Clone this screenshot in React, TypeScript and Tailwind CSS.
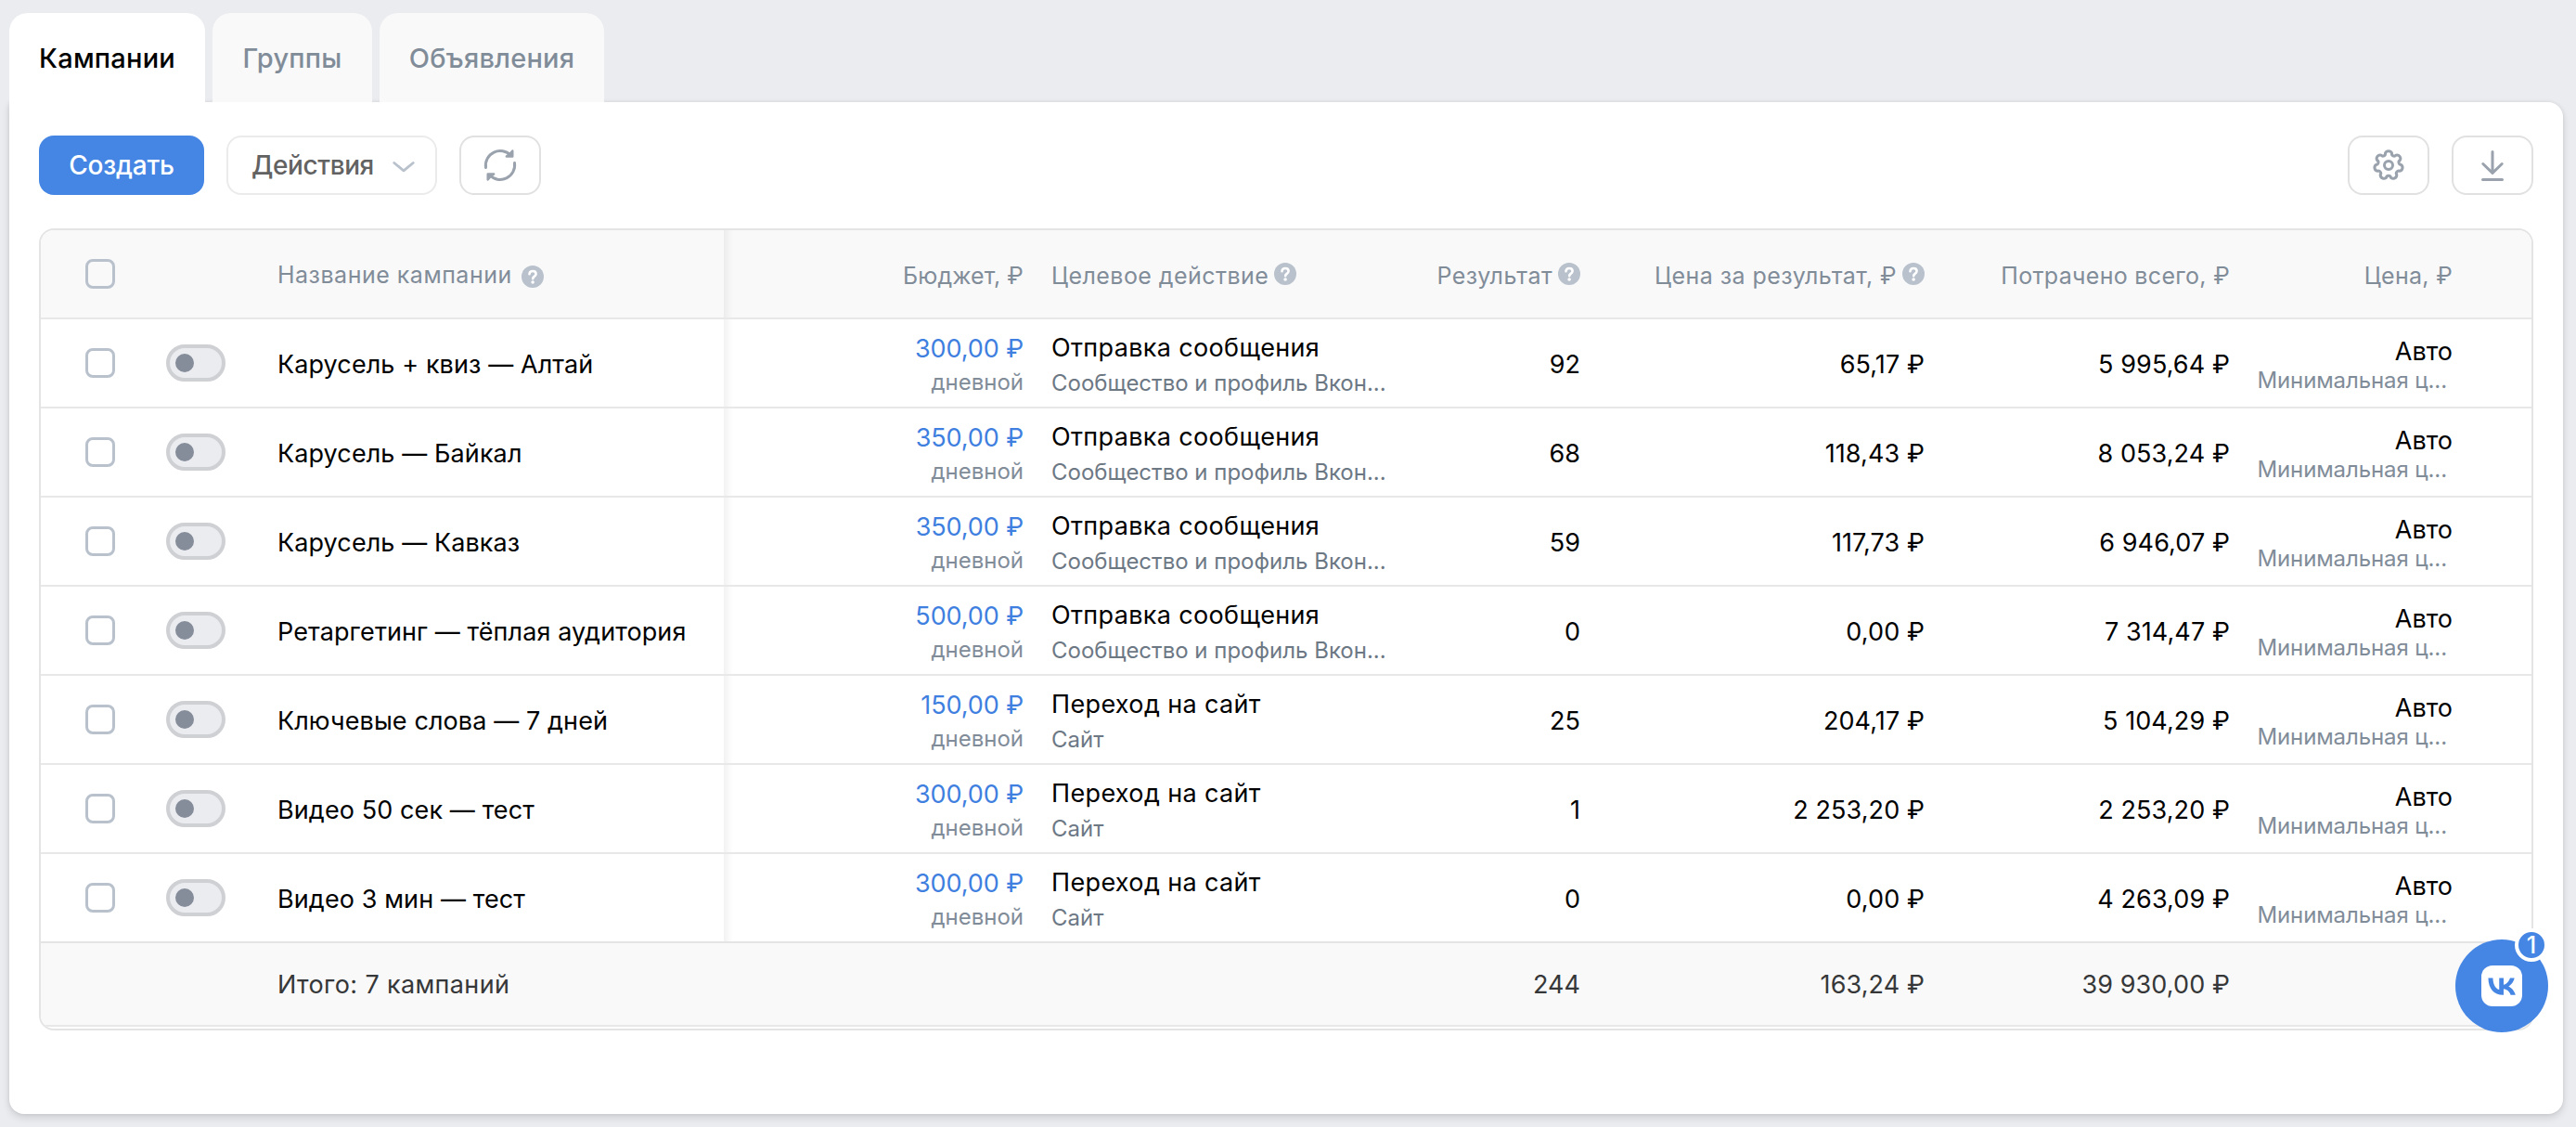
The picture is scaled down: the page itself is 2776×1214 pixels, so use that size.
import type { ReactNode } from "react";

const campaigns = [
  { name: "Карусель + квиз — Алтай", budget: "300,00 ₽", target: "Отправка сообщения", place: "Сообщество и профиль Вкон...", result: "92", price: "65,17 ₽", spent: "5 995,64 ₽" },
  { name: "Карусель — Байкал", budget: "350,00 ₽", target: "Отправка сообщения", place: "Сообщество и профиль Вкон...", result: "68", price: "118,43 ₽", spent: "8 053,24 ₽" },
  { name: "Карусель — Кавказ", budget: "350,00 ₽", target: "Отправка сообщения", place: "Сообщество и профиль Вкон...", result: "59", price: "117,73 ₽", spent: "6 946,07 ₽" },
  { name: "Ретаргетинг — тёплая аудитория", budget: "500,00 ₽", target: "Отправка сообщения", place: "Сообщество и профиль Вкон...", result: "0", price: "0,00 ₽", spent: "7 314,47 ₽" },
  { name: "Ключевые слова — 7 дней", budget: "150,00 ₽", target: "Переход на сайт", place: "Сайт", result: "25", price: "204,17 ₽", spent: "5 104,29 ₽" },
  { name: "Видео 50 сек — тест", budget: "300,00 ₽", target: "Переход на сайт", place: "Сайт", result: "1", price: "2 253,20 ₽", spent: "2 253,20 ₽" },
  { name: "Видео 3 мин — тест", budget: "300,00 ₽", target: "Переход на сайт", place: "Сайт", result: "0", price: "0,00 ₽", spent: "4 263,09 ₽" },
];

// Seven-lobed gear outline, first lobe pointing up
function gearPath() {
  const at = (deg: number) => {
    const a = ((deg - 90) * Math.PI) / 180;
    return `${(18 + 13.5 * Math.cos(a)).toFixed(2)} ${(18 + 13.5 * Math.sin(a)).toFixed(2)}`;
  };
  const step = 360 / 7;
  let d = `M${at(-15)}`;
  for (let i = 0; i < 7; i++) {
    d += `A3.8 3.8 0 0 1 ${at(i * step + 15)}A2.6 2.6 0 0 0 ${at((i + 1) * step - 15)}`;
  }
  return d + "Z";
}

function Icon({ children }: { children: ReactNode }) {
  return (
    <svg className="size-9 text-[#99a2ad]" viewBox="0 0 36 36" fill="none" stroke="currentColor" strokeWidth="3" strokeLinecap="round" strokeLinejoin="round">
      {children}
    </svg>
  );
}

function IconButton({ children }: { children: ReactNode }) {
  return (
    <button className="flex h-16 w-[88px] items-center justify-center rounded-2xl border-2 border-[#e1e1e1] bg-white">
      {children}
    </button>
  );
}

function Help() {
  return (
    <svg className="size-6 shrink-0" viewBox="0 0 24 24" fill="none">
      <circle cx="12" cy="12" r="12" fill="#b8c1cc" />
      <path d="M8.5 9.3C8.6 7.2 10 6 12.1 6c2 0 3.5 1.2 3.5 3 0 1.4-.8 2.1-1.9 2.9-1 .7-1.5 1.2-1.5 2.3" stroke="#fff" strokeWidth="2.6" strokeLinecap="round" />
      <circle cx="12.1" cy="18" r="1.8" fill="#fff" />
    </svg>
  );
}

function Checkbox() {
  return <div className="size-8 shrink-0 rounded-lg border-3 border-[#b8c1cc]" />;
}

function Toggle() {
  return (
    <div className="flex h-10 w-16 shrink-0 items-center rounded-full border-4 border-[#cfd0d4] bg-[#ebecf0] pl-[6px]">
      <div className="size-5 rounded-full bg-[#858d9a]" />
    </div>
  );
}

function ColumnShadow() {
  return <div className="w-[10px] shrink-0 self-stretch bg-linear-to-r from-black/5 to-transparent" />;
}

export default function App() {
  return (
    <div className="relative h-[1214px] w-[2776px] overflow-hidden bg-[#ebecf0] px-[10px] pt-[14px] font-['Inter','Liberation_Sans',sans-serif] text-[27px] leading-9">
      <div className="flex h-24 gap-2 text-[29px] font-medium tracking-[0.2px] whitespace-nowrap text-[#818c99]">
        <div className="flex w-[211px] items-center justify-center rounded-t-[20px] bg-white pt-[2px] text-black">Кампании</div>
        <div className="flex w-[172px] items-center justify-center rounded-t-[20px] bg-[#f9f9f9] pt-[2px]">Группы</div>
        <div className="flex w-[242px] items-center justify-center rounded-t-[20px] bg-[#f9f9f9] pt-[2px]">Объявления</div>
      </div>

      <div className="h-[1090px] w-[2752px] rounded-2xl rounded-tl-none bg-white px-8 pt-9 shadow-[0_0_4px_rgba(0,0,0,0.08),0_4px_8px_rgba(0,0,0,0.12)]">
        <div className="flex gap-6 text-[28px] font-medium">
          <button className="h-16 w-[178px] rounded-2xl bg-[#4586e4] tracking-[-0.2px] text-white">Создать</button>
          <button className="flex h-16 w-[227px] items-center justify-between rounded-2xl border-2 border-[#ebebeb] pr-[22px] pl-[25px] tracking-[-0.4px] text-[#626262]">
            Действия
            <svg className="mt-1 h-3 w-6" viewBox="0 0 24 12" fill="none" stroke="#b8c1cc" strokeWidth="2.8" strokeLinecap="round" strokeLinejoin="round">
              <path d="M1.8 1.5 12 9.8 22.2 1.5" />
            </svg>
          </button>
          <IconButton>
            <Icon>
              <path d="M2.5 20.5A15.7 15.7 0 0 1 29.5 7.5" />
              <path d="M31.3 2.5V8.5H24.8L28.5 5.8Z" fill="currentColor" strokeWidth="2.4" />
              <path d="M33.5 15.500A15.7 15.7 0 0 1 6.5 28.5" />
              <path d="M4.7 33.5V27.5H11.2L7.5 30.2Z" fill="currentColor" strokeWidth="2.4" />
            </Icon>
          </IconButton>
          <div className="ml-auto flex gap-6">
            <IconButton>
              <Icon>
                <path d={gearPath()} />
                <circle cx="18" cy="18" r="4.5" />
              </Icon>
            </IconButton>
            <IconButton>
              <Icon>
                <path d="M18 3.5V26M7.8 16.5 18 26.3 28.2 16.5M7.5 33.5H28.5" />
              </Icon>
            </IconButton>
          </div>
        </div>

        <div className="mt-9 overflow-hidden rounded-2xl border-2 border-[#e4e4e4] pb-[2px] whitespace-nowrap">
          <div className="flex h-24 items-center border-b-2 border-[#e8e8e8] bg-[#f9f9f9] text-[25px] tracking-[0.45px] text-[#818c99]">
            <div className="flex w-[736px] shrink-0 items-center pl-12">
              <Checkbox />
              <div className="ml-[175px] flex items-center gap-[10px] pt-[2px] tracking-[0.5px]">
                Название кампании
                <div className="pt-1"><Help /></div>
              </div>
            </div>
            <ColumnShadow />
            <div className="w-[329px] pt-[3px] pr-4 text-right tracking-[0.1px]">Бюджет, ₽</div>
            <div className="flex w-[360px] items-center gap-[6px] pl-[14px]">
              <span className="pt-[3px]">Целевое действие</span>
              <Help />
            </div>
            <div className="flex w-60 items-center justify-end gap-[6px] pr-4">
              <span className="pt-[3px]">Результат</span>
              <Help />
            </div>
            <div className="flex w-[371px] items-center justify-end gap-[6px] pr-4">
              <span className="pt-[3px]">Цена за результат, ₽</span>
              <Help />
            </div>
            <div className="w-[329px] pt-[3px] pr-4 text-right tracking-[0.3px]">Потрачено всего, ₽</div>
            <div className="flex-1 pt-[3px] pr-[85px] text-right tracking-[0.3px]">Цена, ₽</div>
          </div>

          {campaigns.map((c, i) => (
            <div key={c.name} className={`flex h-24 items-center border-b-2 text-black ${i === campaigns.length - 1 ? "border-[#e4e4e4]" : "border-[#e8e8e8]"}`}>
              <div className="flex w-[736px] shrink-0 items-center pl-12">
                <Checkbox />
                <div className="ml-[55px]"><Toggle /></div>
                <div className="ml-14 pt-[3px] tracking-[0.1px]">{c.name}</div>
              </div>
              <ColumnShadow />
              <div className="w-[329px] pt-[5px] pr-4 text-right">
                <div className="tracking-[-0.1px] text-[#3f7fe0]">{c.budget}</div>
                <div className="text-[24px] text-[#818c99]">дневной</div>
              </div>
              <div className="w-[360px] pt-[6px] pl-[14px]">
                <div className="leading-[38px] tracking-[0.35px]">{c.target}</div>
                <div className="text-[24px] leading-[38px] text-[#6d7885]">{c.place}</div>
              </div>
              <div className="w-60 pt-[3px] pr-4 text-right">{c.result}</div>
              <div className="w-[371px] pt-[3px] pr-4 text-right tracking-[0.1px]">{c.price}</div>
              <div className="w-[329px] pt-[3px] pr-4 text-right tracking-[0.1px]">{c.spent}</div>
              <div className="flex-1 pt-[6px] pr-[85px] text-right">
                <div className="leading-[30px]">Авто</div>
                <div className="pr-[6px] text-[24px] leading-[31px] tracking-[-0.1px] text-[#818c99]">Минимальная ц...</div>
              </div>
            </div>
          ))}

          <div className="flex h-[90px] items-center border-b-2 border-[#e8e8e8] bg-[#f9f9f9] pt-[2px] text-[#363738]">
            <div className="w-[736px] shrink-0 pl-[255px] tracking-[0.35px]">Итого: 7 кампаний</div>
            <div className="w-[939px] pr-4 text-right">244</div>
            <div className="w-[371px] pr-4 text-right tracking-[0.1px]">163,24 ₽</div>
            <div className="w-[329px] pr-4 text-right tracking-[0.1px]">39 930,00 ₽</div>
          </div>
        </div>
      </div>

      {/* Floating messenger button */}
      <div className="absolute top-[1012px] left-[2646px] flex size-[100px] items-center justify-center rounded-full bg-[#4586e4]">
        <div className="size-11 rounded-xl bg-white">
          <svg className="size-11" viewBox="0 0 24 24" fill="#4586e4">
            <path d="M6.79 7.3H4.05c.13 6.24 3.25 9.99 8.72 9.99h.31v-3.57c2.01.2 3.53 1.67 4.14 3.57h2.84c-.78-2.84-2.83-4.41-4.11-5.01 1.28-.74 3.08-2.54 3.51-4.98h-2.58c-.56 1.98-2.22 3.78-3.8 3.95V7.3H10.5v6.92c-1.6-.4-3.62-2.34-3.71-6.92Z" />
          </svg>
        </div>
        <div className="absolute -top-3 right-0 flex size-9 items-center justify-center rounded-full border-4 border-white bg-[#4586e4] text-[25px] leading-none font-medium text-white">1</div>
      </div>
    </div>
  );
}
